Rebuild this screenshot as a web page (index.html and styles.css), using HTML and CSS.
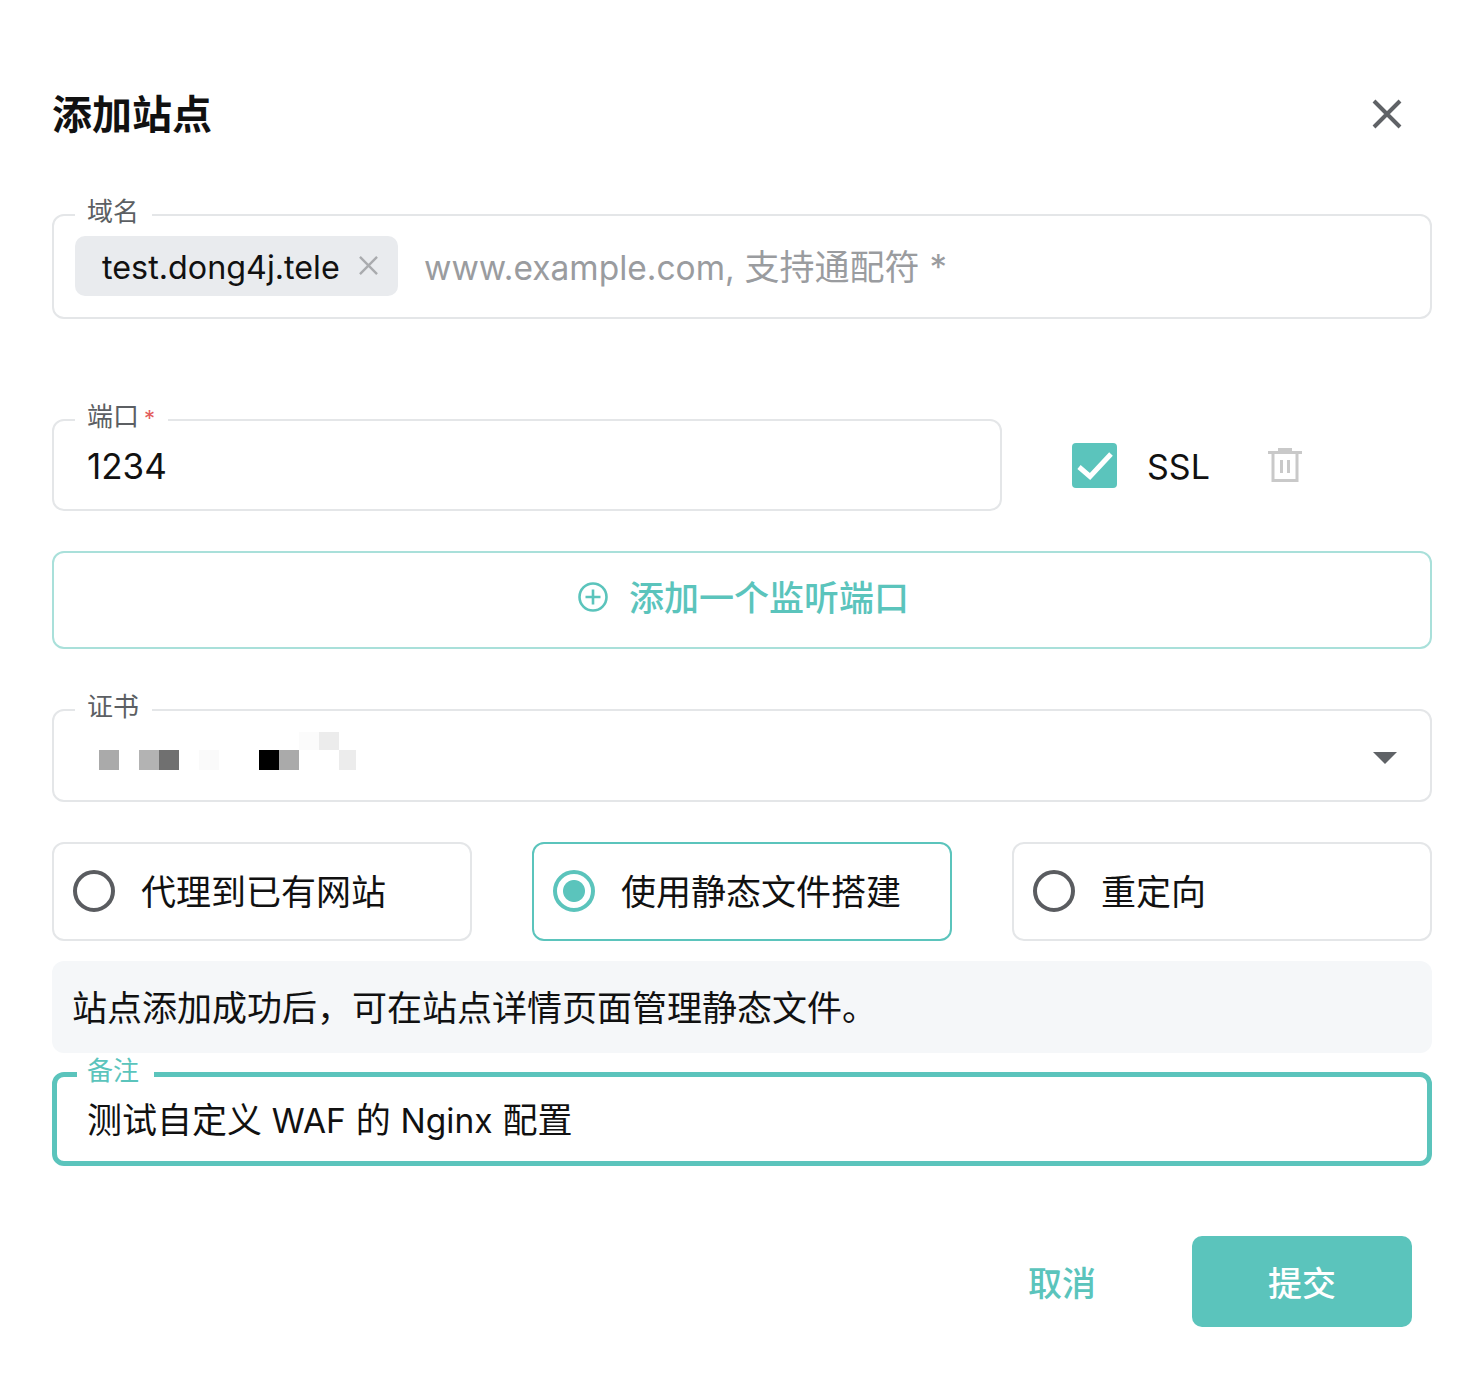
FILE: index.html
```html
<!DOCTYPE html>
<html lang="zh-CN">
<head>
    <meta charset="UTF-8">
    <meta name="viewport" content="width=device-width, initial-scale=1.0">
    <title>添加站点</title>
    <link rel="stylesheet" href="styles.css">
</head>
<body>
    <div class="dialog">
        <div class="dialog-title">
            <h1>添加站点</h1>
            <svg class="close-icon" viewBox="0 0 30 30"><path d="M2 2 L28 28 M28 2 L2 28"/></svg>
        </div>

        <div class="field domain-field">
            <label class="field-label">域名</label>
            <div class="chip">
                <span>test.dong4j.tele</span>
                <svg class="chip-close" viewBox="0 0 20 20"><path d="M1 1 L19 19 M19 1 L1 19"/></svg>
            </div>
            <span class="placeholder"><span class="latin">www.example.com,</span> 支持通配符 *</span>
        </div>

        <div class="port-row">
            <div class="field port-field">
                <label class="field-label">端口<span class="required">*</span></label>
                <span class="value">1234</span>
            </div>
            <div class="checkbox">
                <svg viewBox="0 0 45 45"><path d="M7 24 L18 33.5 L39 11"/></svg>
            </div>
            <span class="ssl-label">SSL</span>
            <svg class="trash-icon" viewBox="0 0 34 34">
                <path class="trash-lid" d="M0 3 H34 V6 H0 Z M10 0 H24 V3 H10 Z"/>
                <path class="trash-body" d="M5 5 V32.5 H29 V5"/>
                <path class="trash-bars" d="M13.5 12 V25 M20.5 12 V25"/>
            </svg>
        </div>

        <div class="add-port">
            <svg class="add-icon" viewBox="0 0 30 30">
                <circle cx="15" cy="15" r="13.5"/>
                <path d="M15 7.5 V22.5 M7.5 15 H22.5"/>
            </svg>
            <span class="add-text">添加一个监听端口</span>
        </div>

        <div class="field cert-field">
            <label class="field-label">证书</label>
            <div class="mosaic">
                <i></i><i></i><i></i><i></i><i></i><i></i><i></i><i></i><i></i><i></i><b class="m-faint"></b><b class="m-light"></b><i></i>
                <b class="m-gray"></b><i></i><b class="m-silver"></b><b class="m-dark"></b><i></i><b class="m-fainter"></b><i></i><i></i><b class="m-black"></b><b class="m-gray"></b><i></i><i></i><b class="m-light"></b>
            </div>
            <span class="select-arrow"></span>
        </div>

        <div class="mode-row">
            <div class="mode">
                <span class="radio"></span>
                <span class="mode-text">代理到已有网站</span>
            </div>
            <div class="mode mode-active">
                <span class="radio"></span>
                <span class="mode-text">使用静态文件搭建</span>
            </div>
            <div class="mode">
                <span class="radio"></span>
                <span class="mode-text">重定向</span>
            </div>
        </div>

        <div class="info">站点添加成功后，可在站点详情页面管理静态文件。</div>

        <div class="field remark-field">
            <label class="field-label">备注</label>
            <span class="value">测试自定义 <span class="latin">WAF</span> 的 <span class="latin">Nginx</span> 配置</span>
        </div>

        <div class="dialog-actions">
            <button type="button" class="btn-cancel">取消</button>
            <button type="button" class="btn-submit">提交</button>
        </div>
    </div>
</body>
</html>
```

FILE: styles.css
```css
* {
    box-sizing: border-box;
}
body {
    margin: 0;
    background-color: #fff;
    color: #000;
    font-family: Inter, "Noto Sans CJK SC", sans-serif;
}
.dialog {
    width: 1484px;
    height: 1398px;
    padding: 84px 52px 0;
}
.dialog-title {
    display: flex;
    justify-content: space-between;
    align-items: center;
    height: 60px;
    padding-right: 30px;
}
.dialog-title h1 {
    margin: 2px 0 0;
    font-size: 40px;
    font-weight: 700;
    line-height: 60px;
    color: #111;
}
.close-icon {
    width: 30px;
    height: 30px;
    fill: none;
    stroke: #5f6266;
    stroke-width: 4;
}
.latin {
    font-size: 33.5px;
}
.field {
    position: relative;
    display: flex;
    align-items: center;
    border: 2px solid #e4e6e8;
    border-radius: 12px;
    padding: 0 33px;
}
.field-label {
    position: absolute;
    top: -22px;
    left: 21px;
    padding: 0 13px 0 12px;
    background-color: #fff;
    font-size: 26px;
    line-height: 36px;
    color: #5c5f63;
}
.required {
    margin-left: 5px;
    font-size: 22px;
    color: #e35d5d;
}
.value {
    font-size: 35px;
    color: #111;
}
.domain-field {
    margin-top: 70px;
    height: 105px;
    padding: 0 21px 2px;
}
.chip {
    display: flex;
    align-items: center;
    gap: 19px;
    width: 323px;
    height: 60px;
    padding: 4px 0 0 27px;
    border-radius: 10px;
    background-color: #e9ebee;
    font-size: 32.3px;
    color: #111;
}
.chip-close {
    width: 19px;
    height: 19px;
    margin-bottom: 4px;
    fill: none;
    stroke: #a9abae;
    stroke-width: 2.5;
}
.placeholder {
    margin-left: 26px;
    padding-bottom: 2px;
    font-size: 35px;
    color: #9a9c9f;
}
.port-row {
    display: flex;
    align-items: center;
    margin-top: 100px;
}
.port-field {
    width: 950px;
    height: 92px;
    padding-top: 2px;
}
.checkbox {
    width: 45px;
    height: 45px;
    margin-left: 70px;
    border-radius: 4px;
    background-color: #5bc4bc;
}
.checkbox svg {
    display: block;
    width: 45px;
    height: 45px;
    fill: none;
    stroke: #fff;
    stroke-width: 5;
}
.ssl-label {
    margin-left: 30px;
    padding-top: 2px;
    font-size: 34px;
    color: #111;
}
.trash-icon {
    width: 34px;
    height: 34px;
    margin-left: 58px;
}
.trash-lid {
    fill: #c9c9c9;
}
.trash-body {
    fill: none;
    stroke: #c9c9c9;
    stroke-width: 3;
}
.trash-bars {
    fill: none;
    stroke: #c9c9c9;
    stroke-width: 3;
}
.add-port {
    display: flex;
    align-items: center;
    justify-content: center;
    gap: 21px;
    height: 98px;
    margin-top: 40px;
    padding: 0 0 6px 3px;
    border: 2px solid #a9e0da;
    border-radius: 12px;
    font-size: 35px;
    color: #5bc4bc;
}
.add-text {
    padding-bottom: 4px;
    font-weight: 500;
}
.add-icon {
    width: 30px;
    height: 30px;
    fill: none;
    stroke: #5bc4bc;
    stroke-width: 2.6;
}
.cert-field {
    justify-content: space-between;
    height: 93px;
    margin-top: 60px;
    padding: 0 33px 0 45px;
}
.mosaic {
    display: grid;
    grid-template-columns: repeat(12, 20px) 17px;
    grid-template-rows: 18px 20px;
    margin-top: -10px;
}
.m-black {
    background-color: #000;
}
.m-dark {
    background-color: #707070;
}
.m-gray {
    background-color: #aaa;
}
.m-silver {
    background-color: #b3b3b3;
}
.m-light {
    background-color: #ececec;
}
.m-faint {
    background-color: #fbfbfb;
}
.m-fainter {
    background-color: #fafafa;
}
.select-arrow {
    width: 0;
    height: 0;
    margin-top: 4px;
    border-left: 12px solid transparent;
    border-right: 12px solid transparent;
    border-top: 12px solid #5f6266;
}
.mode-row {
    display: flex;
    gap: 60px;
    margin-top: 40px;
}
.mode {
    display: flex;
    align-items: center;
    gap: 26px;
    flex: 1;
    height: 99px;
    padding: 0 0 2px 19px;
    border: 2px solid #e4e6e8;
    border-radius: 12px;
    font-size: 35px;
    color: #111;
}
.mode-text {
    padding-bottom: 2px;
}
.radio {
    width: 42px;
    height: 42px;
    border: 4px solid #5a5c60;
    border-radius: 50%;
}
.mode-active {
    border-color: #5bc4bc;
}
.mode-active .radio {
    border-color: #5bc4bc;
    background: radial-gradient(circle, #5bc4bc 0 10.5px, #fff 11.5px);
}
.info {
    height: 92px;
    margin-top: 20px;
    padding: 0 20px;
    border-radius: 12px;
    background-color: #f5f7f9;
    font-size: 35px;
    line-height: 94px;
    color: #111;
}
.remark-field {
    height: 94px;
    margin-top: 19px;
    border: 5px solid #5bc4bc;
    padding: 0 30px 4px;
}
.remark-field .field-label {
    top: -24px;
    left: 20px;
    padding: 0 15px 0 10px;
    color: #5bc4bc;
}
.dialog-actions {
    display: flex;
    justify-content: flex-end;
    align-items: center;
    gap: 96px;
    margin-top: 70px;
    padding-right: 20px;
}
.dialog-actions button {
    padding: 0;
    border: none;
    background: none;
    font-family: inherit;
    font-size: 34px;
    font-weight: 500;
    cursor: pointer;
}
.dialog-actions .btn-cancel {
    color: #5bc4bc;
}
.dialog-actions .btn-submit {
    width: 220px;
    height: 91px;
    border-radius: 10px;
    background-color: #5bc4bc;
    color: #fff;
}
```
